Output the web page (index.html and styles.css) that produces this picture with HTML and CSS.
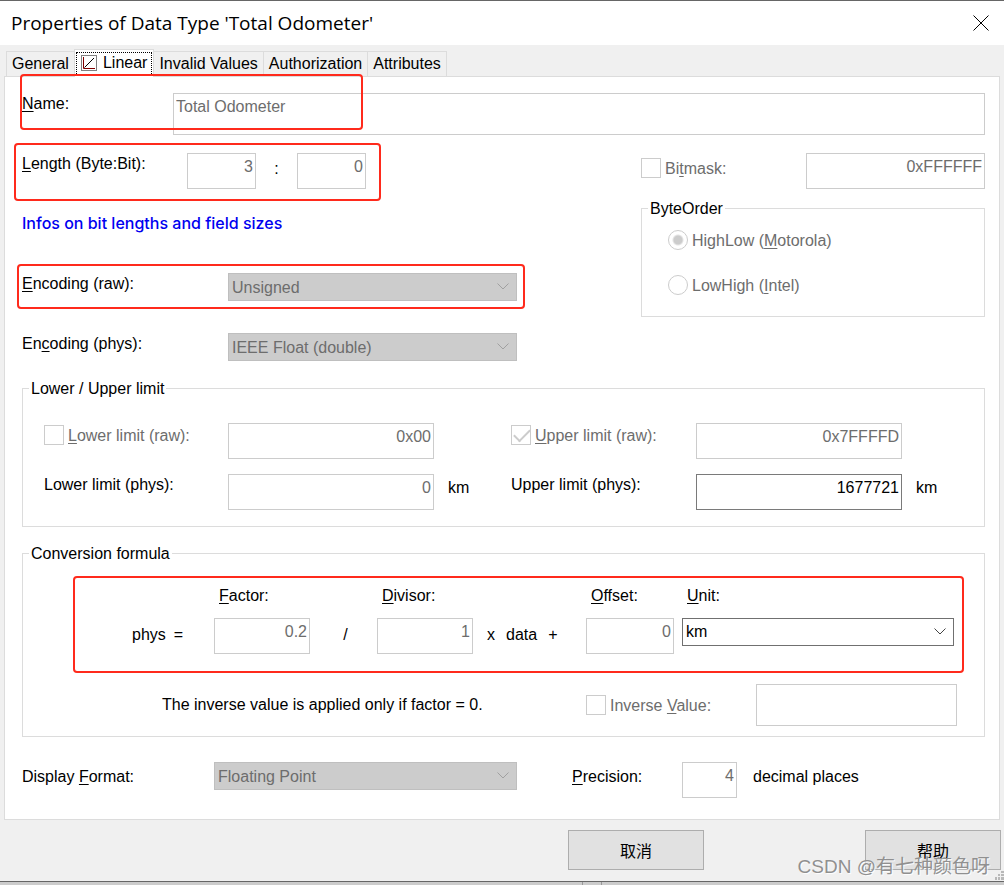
FILE: index.html
```html
<!DOCTYPE html>
<html lang="en">

<head>
    <meta charset="UTF-8">
    <meta name="viewport" content="width=device-width, initial-scale=1.0">
    <title>Properties of Data Type 'Total Odometer'</title>
    <link rel="stylesheet" href="styles.css">
</head>

<body>
    <header class="title-bar">
        <h1>Properties of Data Type 'Total Odometer'</h1>
        <button type="button" class="close-btn" aria-label="Close">
            <svg width="16" height="16" viewBox="0 0 16 16"><path d="M0.5 0.5 L15.5 15.5 M15.5 0.5 L0.5 15.5" /></svg>
        </button>
    </header>

    <nav class="tabs">
        <button type="button" class="tab">General</button>
        <button type="button" class="tab active">
            <span class="focus">
                <svg width="16" height="16" viewBox="0 0 16 16">
                    <rect x="0.5" y="0.5" width="15" height="15" fill="#fff" stroke="#808080" />
                    <path d="M3.5 12.5 L13 3" stroke="#000" fill="none" />
                    <path d="M2.5 2 V13.5 H14" stroke="#800000" fill="none" />
                </svg>
                Linear
            </span>
        </button>
        <button type="button" class="tab">Invalid Values</button>
        <button type="button" class="tab">Authorization</button>
        <button type="button" class="tab">Attributes</button>
    </nav>

    <main class="panel">
        <div class="row">
            <span class="highlight highlight-name"></span>
            <label for="name" class="label-name"><u>N</u>ame:</label>
            <input type="text" id="name" class="field tall grow" value="Total Odometer" disabled>
        </div>

        <div class="columns">
            <div class="left">
                <div class="row">
                    <span class="highlight highlight-length"></span>
                    <label for="bytes" class="label-length"><u>L</u>ength (Byte:Bit):</label>
                    <input type="text" id="bytes" class="field number size" value="3" disabled>
                    <span class="colon">:</span>
                    <input type="text" class="field number size" value="0" aria-label="Bits" disabled>
                </div>

                <a href="#" class="info-link">Infos on bit lengths and field sizes</a>

                <div class="row encoding">
                    <span class="highlight highlight-encoding"></span>
                    <label for="encodingRaw" class="label-encoding"><u>E</u>ncoding (raw):</label>
                    <div class="select">
                        <select id="encodingRaw" disabled>
                            <option>Unsigned</option>
                        </select>
                        <svg width="12" height="7" viewBox="0 0 12 7"><path d="M0.5 0.5 L6 6 L11.5 0.5" /></svg>
                    </div>
                </div>

                <div class="row encoding">
                    <label for="encodingPhys" class="label-encoding">En<u>c</u>oding (phys):</label>
                    <div class="select">
                        <select id="encodingPhys" disabled>
                            <option>IEEE Float (double)</option>
                        </select>
                        <svg width="12" height="7" viewBox="0 0 12 7"><path d="M0.5 0.5 L6 6 L11.5 0.5" /></svg>
                    </div>
                </div>
            </div>

            <div class="right">
                <div class="row bitmask">
                    <label class="check"><input type="checkbox" disabled><span>Bi<u>t</u>mask:</span></label>
                    <input type="text" class="field number mask" value="0xFFFFFF" aria-label="Bitmask value" disabled>
                </div>
                <fieldset class="byte-order">
                    <legend>ByteOrder</legend>
                    <label class="check"><input type="radio" name="order" checked disabled><span>HighLow (<u>M</u>otorola)</span></label>
                    <label class="check"><input type="radio" name="order" disabled><span>LowHigh (<u>I</u>ntel)</span></label>
                </fieldset>
            </div>
        </div>

        <fieldset class="limits">
            <legend>Lower / Upper limit</legend>
            <div class="limit-grid">
                <label class="check limit-check"><input type="checkbox" disabled><span><u>L</u>ower limit (raw):</span></label>
                <div class="row">
                    <input type="text" class="field number limit" value="0x00" aria-label="Lower limit raw value" disabled>
                </div>
                <label class="check limit-check"><input type="checkbox" checked disabled><span><u>U</u>pper limit (raw):</span></label>
                <div class="row">
                    <input type="text" class="field number limit" value="0x7FFFFD" aria-label="Upper limit raw value" disabled>
                </div>

                <label for="lowerPhys">Lower limit (phys):</label>
                <div class="row">
                    <input type="text" id="lowerPhys" class="field number limit" value="0" disabled>
                    <span class="unit">km</span>
                </div>
                <label for="upperPhys">Upper limit (phys):</label>
                <div class="row">
                    <input type="text" id="upperPhys" class="field number limit" value="1677721">
                    <span class="unit">km</span>
                </div>
            </div>
        </fieldset>

        <fieldset class="conversion">
            <legend>Conversion formula</legend>
            <div class="formula">
                <label for="factor" class="col-factor"><u>F</u>actor:</label>
                <label for="divisor" class="col-divisor"><u>D</u>ivisor:</label>
                <label for="offset" class="col-offset"><u>O</u>ffset:</label>
                <label for="unit" class="col-unit"><u>U</u>nit:</label>

                <span class="term"><span>phys</span><span>=</span></span>
                <input type="text" id="factor" class="field number" value="0.2" disabled>
                <span class="term divide">/</span>
                <input type="text" id="divisor" class="field number" value="1" disabled>
                <span class="term times"><span>x</span><span>data</span><span>+</span></span>
                <input type="text" id="offset" class="field number" value="0" disabled>
                <div class="select">
                    <select id="unit">
                        <option>km</option>
                    </select>
                    <svg width="12" height="7" viewBox="0 0 12 7"><path d="M0.5 0.5 L6 6 L11.5 0.5" /></svg>
                </div>
            </div>
            <div class="inverse">
                <p>The inverse value is applied only if factor = 0.</p>
                <label class="check"><input type="checkbox" disabled><span>Inverse <u>V</u>alue:</span></label>
                <input type="text" class="field tall" aria-label="Inverse value" disabled>
            </div>
        </fieldset>

        <div class="row display">
            <label for="format" class="label-format">Display <u>F</u>ormat:</label>
            <div class="select format">
                <select id="format" disabled>
                    <option>Floating Point</option>
                </select>
                <svg width="12" height="7" viewBox="0 0 12 7"><path d="M0.5 0.5 L6 6 L11.5 0.5" /></svg>
            </div>
            <label for="precision" class="label-precision"><u>P</u>recision:</label>
            <input type="text" id="precision" class="field number precision" value="4" disabled>
            <span class="places">decimal places</span>
        </div>
    </main>

    <footer class="footer">
        <button type="button" class="btn">取消</button>
        <button type="button" class="btn">帮助</button>
        <svg class="grip" width="9" height="9" viewBox="0 0 9 9">
            <path d="M6 0h3v2h-3z M3 3h2v2h-2z M6 3h3v2h-3z M0 6h2v3h-2z M3 6h2v3h-2z M6 6h3v3h-3z" fill="#b8b8b8" />
        </svg>
        <span class="watermark">CSDN @有七种颜色呀</span>
    </footer>
    <div class="status-strip"><span></span></div>
</body>

</html>
```
FILE: styles.css
```css
* {
    box-sizing: border-box;
}

body {
    margin: 0;
    background-color: #f0f0f0;
    color: #000;
    font-family: "Liberation Sans", Arial, "Noto Sans CJK SC", sans-serif;
    font-size: 16px;
    line-height: 22px;
}

input,
select,
button {
    margin: 0;
    font: inherit;
    color: inherit;
}

u {
    text-decoration-thickness: 1px;
    text-underline-offset: 2px;
}

/* Title bar */
.title-bar {
    display: flex;
    justify-content: space-between;
    align-items: center;
    height: 45px;
    padding: 0 15px 0 11px;
    border-top: 1px solid #666;
    background-color: white;
}

.title-bar h1 {
    margin: 0;
    font-family: "Open Sans", "Noto Sans", sans-serif;
    font-size: 19px;
    font-weight: normal;
}

.close-btn {
    display: flex;
    padding: 0;
    border: none;
    background: none;
}

.close-btn svg {
    fill: none;
    stroke: #000;
}

/* Tabs */
.tabs {
    display: flex;
    align-items: flex-end;
    height: 31px;
    padding-left: 6px;
}

.tab {
    height: 25px;
    padding: 0 5px;
    border: 1px solid #dcdcdc;
    border-bottom: none;
    border-left: none;
    background-color: #f0f0f0;
    line-height: 24px;
}

.tab:first-child {
    border-left: 1px solid #dcdcdc;
    border-right: none;
}

.tab.active {
    position: relative;
    height: 28px;
    margin-bottom: -1px;
    padding: 1px 1px 3px;
    border-left: 1px solid #dcdcdc;
    background-color: white;
}

.focus {
    display: flex;
    align-items: center;
    gap: 6px;
    height: 22px;
    padding: 0 4px;
    border: 1px dotted #000;
    border-bottom: none;
}

/* Panel */
.panel {
    margin: 0 4px;
    padding: 16px 14px 21px 17px;
    border: 1px solid #dcdcdc;
    background-color: white;
}

.row {
    display: flex;
    align-items: flex-start;
    position: relative;
}

.field {
    min-width: 0;
    height: 36px;
    padding: 0 2px 8px;
    border: 1px solid #7a7a7a;
    border-radius: 0;
    background-color: white;
}

.field:disabled {
    border-color: #ccc;
    color: #6d6d6d;
}

.tall {
    height: 42px;
    padding-bottom: 14px;
}

.grow {
    flex: 1;
}

.number {
    text-align: right;
}

.label-name {
    width: 151px;
}

.label-length {
    width: 165px;
}

.label-encoding {
    width: 206px;
}

/* Red frames over the important rows */
.highlight {
    position: absolute;
    z-index: 1;
    border: 2px solid #ff2a1c;
    border-radius: 4px;
    pointer-events: none;
}

.highlight-name {
    top: -19px;
    left: -2px;
    width: 343px;
    height: 56px;
}

.highlight-length {
    top: -10px;
    left: -8px;
    width: 367px;
    height: 58px;
}

.highlight-encoding {
    top: -9px;
    left: -5px;
    width: 508px;
    height: 45px;
}

.columns {
    display: grid;
    grid-template-columns: 1fr 344px;
    margin-top: 18px;
}

.size {
    width: 69px;
}

.colon {
    width: 41px;
    padding-top: 5px;
    text-align: center;
}

.info-link {
    display: block;
    width: fit-content;
    margin-top: 23px;
    color: #0000f0;
    font-family: Inter, "Liberation Sans", sans-serif;
    font-weight: 500;
    text-decoration: none;
}

.encoding {
    margin-top: 32px;
}

.info-link + .encoding {
    margin-top: 39px;
}

/* Drop-downs */
.select {
    position: relative;
    width: 289px;
    height: 28px;
}

.select select {
    width: 100%;
    height: 28px;
    padding: 0 3px;
    border: 1px solid #707070;
    border-radius: 0;
    background-color: white;
    appearance: none;
}

.select select:disabled {
    padding-top: 1px;
    border-color: #bfbfbf;
    background-color: #ccc;
    color: #6d6d6d;
    opacity: 1;
}

.select svg {
    position: absolute;
    top: 10px;
    right: 8px;
    fill: none;
    stroke: #444;
    pointer-events: none;
}

.select select:disabled + svg {
    stroke: #a0a0a0;
}

/* Tick boxes and radios */
.check {
    display: flex;
    align-items: center;
    gap: 4px;
    height: 20px;
    color: #6d6d6d;
}

.check span {
    padding-top: 2px;
}

.check input {
    width: 20px;
    height: 20px;
    border: 1px solid #ccc;
    background-color: white;
    appearance: none;
}

.check input[type="radio"] {
    border-radius: 50%;
}

.check input[type="radio"]:checked {
    background-image: radial-gradient(circle, #ccc 4px, transparent 6px);
}

.check input[type="checkbox"]:checked::before {
    content: "";
    display: block;
    width: 14px;
    height: 7px;
    margin: 3px 0 0 2px;
    border: solid #ccc;
    border-width: 0 0 2px 2px;
    transform: rotate(-45deg);
}

.bitmask {
    justify-content: space-between;
}

.bitmask .check {
    margin-top: 5px;
}

.mask {
    width: 179px;
}

/* Groups */
fieldset {
    min-width: 0;
    margin: 0;
    border: 1px solid #dcdcdc;
}

legend {
    height: 20px;
    padding: 0 2px;
}

.byte-order {
    margin-top: 9px;
    padding: 12px 26px 21px;
}

.byte-order legend {
    margin-left: -20px;
}

.byte-order .check + .check {
    margin-top: 25px;
}

.limits {
    margin-top: 17px;
    padding: 25px 21px 16px;
}

.limits legend {
    margin-left: -15px;
}

.conversion legend {
    margin-left: 6px;
}

.limit-grid {
    display: grid;
    grid-template-columns: 184px 283px 185px 1fr;
    row-gap: 15px;
}

.limit-check {
    margin-top: 2px;
}

.limit {
    width: 206px;
}

.unit {
    padding: 3px 0 0 14px;
}

.conversion {
    margin-top: 16px;
    padding: 13px 0 10px;
}

.formula {
    display: grid;
    grid-template-columns: 82px 96px 67px 96px 113px 88px 1fr;
    row-gap: 11px;
    margin: 0 20px 0 50px;
    padding: 7px 8px 17px 57px;
    border: 2px solid #ff2a1c;
    border-radius: 4px;
}

.formula label {
    padding-left: 5px;
}

.col-factor {
    grid-column: 2;
}

.col-divisor {
    grid-column: 4;
}

.col-offset {
    grid-column: 6;
}

.formula .col-unit {
    padding-left: 13px;
}

.formula .select {
    width: auto;
    margin-left: 8px;
}

.term {
    display: flex;
    gap: 8px;
    padding-top: 6px;
}

.divide {
    justify-content: center;
    padding-left: 4px;
}

.times {
    gap: 11px;
    padding-left: 14px;
}

.inverse {
    display: grid;
    grid-template-columns: 424px 170px 201px;
    align-items: center;
    margin: 11px 0 0 139px;
}

.inverse p {
    margin: 0;
}

.display {
    margin-top: 25px;
}

.display label,
.places {
    padding-top: 4px;
}

.label-format {
    width: 192px;
}

.format {
    width: 303px;
}

.label-precision {
    width: 110px;
    margin-left: 55px;
}

.precision {
    width: 55px;
}

.places {
    margin-left: 16px;
}

/* Footer */
.footer {
    display: flex;
    justify-content: flex-end;
    gap: 161px;
    position: relative;
    padding: 10px 3px 11px;
    border-bottom: 1px solid #666;
}

.btn {
    width: 136px;
    height: 40px;
    padding: 3px 0 0;
    border: 1px solid #adadad;
    background-color: #e1e1e1;
}

.grip {
    position: absolute;
    right: 0;
    bottom: 1px;
}

.watermark {
    position: absolute;
    right: 14px;
    bottom: 2px;
    color: #909090;
    font-size: 19px;
    line-height: 24px;
    text-shadow: 1px 1px 1px white;
}

.status-strip {
    height: 3px;
    background-color: #ccc;
}

.status-strip span {
    display: block;
    width: 20px;
    height: 3px;
    margin-left: 582px;
    border: solid #999;
    border-width: 0 1px;
}
```
